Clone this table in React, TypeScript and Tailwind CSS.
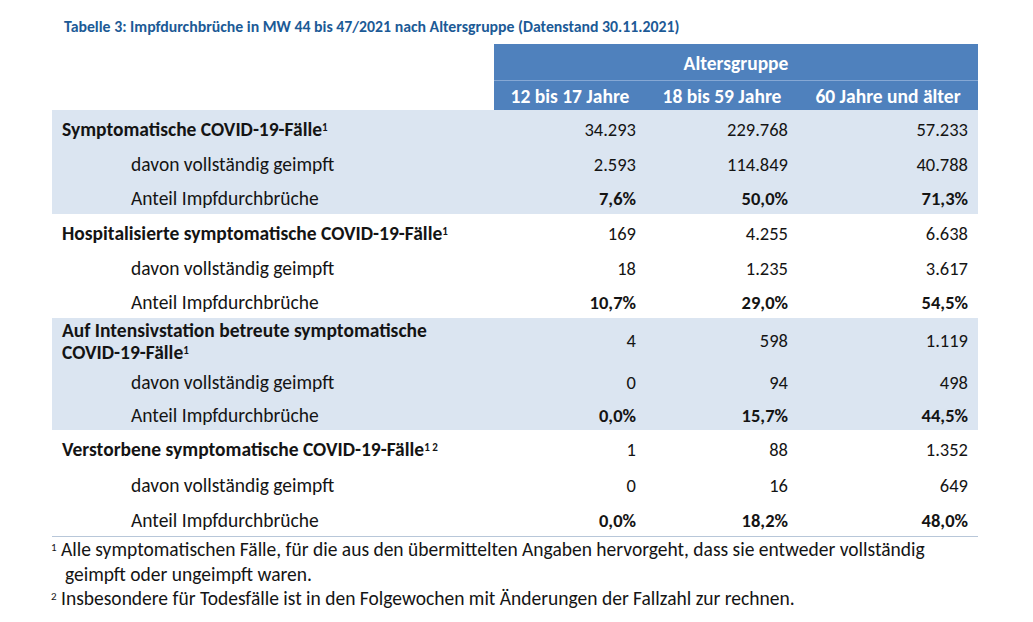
const groups = [
  {
    label: <>Symptomatische COVID-19-Fälle<sup className="text-[11px] font-bold">1</sup></>,
    shaded: true,
    heights: ['h-[36px]', 'h-[34px]', 'h-[34px]'],
    rows: [
      ['34.293', '229.768', '57.233'],
      ['2.593', '114.849', '40.788'],
      ['7,6%', '50,0%', '71,3%'],
    ],
  },
  {
    label: <>Hospitalisierte symptomatische COVID-19-Fälle<sup className="text-[11px] font-bold">1</sup></>,
    shaded: false,
    heights: ['h-[36px]', 'h-[34px]', 'h-[34px]'],
    rows: [
      ['169', '4.255', '6.638'],
      ['18', '1.235', '3.617'],
      ['10,7%', '29,0%', '54,5%'],
    ],
  },
  {
    label: (
      <>
        Auf Intensivstation betreute symptomatische
        <br />
        COVID-19-Fälle<sup className="text-[11px] font-bold">1</sup>
      </>
    ),
    shaded: true,
    heights: ['h-[46px]', 'h-[34px]', 'h-[32px]'],
    rows: [
      ['4', '598', '1.119'],
      ['0', '94', '498'],
      ['0,0%', '15,7%', '44,5%'],
    ],
  },
  {
    label: <>Verstorbene symptomatische COVID-19-Fälle<sup className="text-[11px] font-bold">1 2</sup></>,
    shaded: false,
    heights: ['h-[36px]', 'h-[35px]', 'h-[35px]'],
    rows: [
      ['1', '88', '1.352'],
      ['0', '16', '649'],
      ['0,0%', '18,2%', '48,0%'],
    ],
  },
];

function Cells({ values, bold }: { values: string[]; bold?: boolean }) {
  const weight = bold ? 'font-bold' : '';
  return (
    <>
      <div className={`w-[152px] text-right pr-[10px] text-[18.5px] ${weight}`}>{values[0]}</div>
      <div className={`w-[152px] text-right pr-[10px] text-[18.5px] ${weight}`}>{values[1]}</div>
      <div className={`w-[180px] text-right pr-[10px] text-[18.5px] ${weight}`}>{values[2]}</div>
    </>
  );
}

export default function App() {
  return (
    <div
      className="w-[1033px] h-[622px] bg-white text-[#141414] overflow-hidden"
      style={{ fontFamily: 'Carlito, Lato, "Open Sans", sans-serif' }}
    >
      <div className="pt-[16px] pl-[64px] text-[15.8px] font-bold text-[#1c5a96] leading-[22px]">
        Tabelle 3: Impfdurchbrüche in MW 44 bis 47/2021 nach Altersgruppe (Datenstand 30.11.2021)
      </div>

      <div className="ml-[52px] w-[926px] mt-[6px]">
        {/* Kopfzeile */}
        <div className="flex">
          <div className="w-[442px]" />
          <div className="w-[484px] bg-[#4f81bd] text-white font-bold text-[19.5px]">
            <div className="h-[37px] flex items-center justify-center pt-[3px] border-b border-[#86a8d4]">
              Altersgruppe
            </div>
            <div className="h-[29px] flex items-center pt-[2px]">
              <div className="w-[152px] text-center">12 bis 17 Jahre</div>
              <div className="w-[152px] text-center">18 bis 59 Jahre</div>
              <div className="w-[180px] text-center">60 Jahre und älter</div>
            </div>
          </div>
        </div>

        {/* Tabelle */}
        <div className="text-[19.5px] border-b border-[#b8c7d9]">
          {groups.map((g, gi) => (
            <div key={gi} className={g.shaded ? 'bg-[#dbe5f1]' : 'bg-white'}>
              <div className={`flex items-center ${g.heights[0]} ${gi === 2 ? 'leading-[22px]' : 'pt-[4px]'}`}>
                <div className="w-[442px] pl-[10px] font-bold">{g.label}</div>
                <Cells values={g.rows[0]} />
              </div>
              <div className={`flex items-center pt-[4px] ${g.heights[1]}`}>
                <div className="w-[442px] pl-[79px]">davon vollständig geimpft</div>
                <Cells values={g.rows[1]} />
              </div>
              <div className={`flex items-center pt-[4px] ${g.heights[2]}`}>
                <div className="w-[442px] pl-[79px]">Anteil Impfdurchbrüche</div>
                <Cells values={g.rows[2]} bold />
              </div>
            </div>
          ))}
        </div>
      </div>

      <div className="pl-[51px] text-[19.5px] leading-[24.5px]">
        <div>
          <sup className="text-[11px]">1</sup> Alle symptomatischen Fälle, für die aus den übermittelten Angaben hervorgeht, dass sie entweder vollständig
        </div>
        <div className="pl-[14px]">geimpft oder ungeimpft waren.</div>
        <div>
          <sup className="text-[11px]">2</sup> Insbesondere für Todesfälle ist in den Folgewochen mit Änderungen der Fallzahl zur rechnen.
        </div>
      </div>
    </div>
  );
}
